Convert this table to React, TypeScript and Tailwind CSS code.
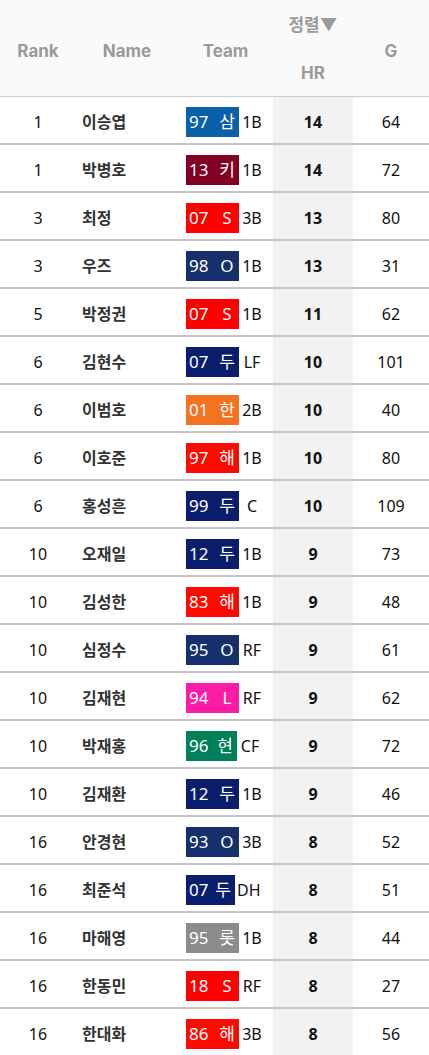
import React from "react";

type Row = {
  rank: number;
  name: string;
  no: string;
  team: string;
  color: string;
  bw: string;
  pos: string;
  hr: number;
  g: number;
};

const rows: Row[] = [
  { rank: 1, name: "이승엽", no: "97", team: "삼", color: "bg-[#0a61a9]", bw: "w-[53px]", pos: "1B", hr: 14, g: 64 },
  { rank: 1, name: "박병호", no: "13", team: "키", color: "bg-[#820024]", bw: "w-[53px]", pos: "1B", hr: 14, g: 72 },
  { rank: 3, name: "최정", no: "07", team: "S", color: "bg-[#ff0000]", bw: "w-[53px]", pos: "3B", hr: 13, g: 80 },
  { rank: 3, name: "우즈", no: "98", team: "O", color: "bg-[#17306c]", bw: "w-[53px]", pos: "1B", hr: 13, g: 31 },
  { rank: 5, name: "박정권", no: "07", team: "S", color: "bg-[#ff0000]", bw: "w-[53px]", pos: "1B", hr: 11, g: 62 },
  { rank: 6, name: "김현수", no: "07", team: "두", color: "bg-[#0b1e6e]", bw: "w-[53px]", pos: "LF", hr: 10, g: 101 },
  { rank: 6, name: "이범호", no: "01", team: "한", color: "bg-[#f37321]", bw: "w-[53px]", pos: "2B", hr: 10, g: 40 },
  { rank: 6, name: "이호준", no: "97", team: "해", color: "bg-[#ff0a00]", bw: "w-[53px]", pos: "1B", hr: 10, g: 80 },
  { rank: 6, name: "홍성흔", no: "99", team: "두", color: "bg-[#0b1e6e]", bw: "w-[53px]", pos: "C", hr: 10, g: 109 },
  { rank: 10, name: "오재일", no: "12", team: "두", color: "bg-[#0b1e6e]", bw: "w-[53px]", pos: "1B", hr: 9, g: 73 },
  { rank: 10, name: "김성한", no: "83", team: "해", color: "bg-[#ff0a00]", bw: "w-[53px]", pos: "1B", hr: 9, g: 48 },
  { rank: 10, name: "심정수", no: "95", team: "O", color: "bg-[#17306c]", bw: "w-[53px]", pos: "RF", hr: 9, g: 61 },
  { rank: 10, name: "김재현", no: "94", team: "L", color: "bg-[#fc1ca6]", bw: "w-[53px]", pos: "RF", hr: 9, g: 62 },
  { rank: 10, name: "박재홍", no: "96", team: "현", color: "bg-[#00805a]", bw: "w-[51px]", pos: "CF", hr: 9, g: 72 },
  { rank: 10, name: "김재환", no: "12", team: "두", color: "bg-[#0b1e6e]", bw: "w-[53px]", pos: "1B", hr: 9, g: 46 },
  { rank: 16, name: "안경현", no: "93", team: "O", color: "bg-[#17306c]", bw: "w-[53px]", pos: "3B", hr: 8, g: 52 },
  { rank: 16, name: "최준석", no: "07", team: "두", color: "bg-[#0b1e6e]", bw: "w-[49px]", pos: "DH", hr: 8, g: 51 },
  { rank: 16, name: "마해영", no: "95", team: "롯", color: "bg-[#8c8c8c]", bw: "w-[53px]", pos: "1B", hr: 8, g: 44 },
  { rank: 16, name: "한동민", no: "18", team: "S", color: "bg-[#ff0000]", bw: "w-[53px]", pos: "RF", hr: 8, g: 27 },
  { rank: 16, name: "한대화", no: "86", team: "해", color: "bg-[#ff0a00]", bw: "w-[53px]", pos: "3B", hr: 8, g: 56 },
];

const App = () => {
  return (
    <div className="w-[429px] bg-white font-['Noto_Sans','Noto_Sans_CJK_KR',sans-serif] text-[16px]">
      <div className="flex h-[97px] border-b border-[#cccccc] bg-[#fafafa] font-['Inter','Noto_Sans_CJK_KR',sans-serif] text-[17px] font-bold text-[#9a9a9a]">
        <div className="flex w-[76px] items-center justify-center pt-[7px]">Rank</div>
        <div className="flex w-[102px] items-center justify-center pt-[7px]">Name</div>
        <div className="flex w-[95px] items-center justify-center pt-[7px]">Team</div>
        <div className="flex w-[80px] flex-col items-center justify-center gap-[26px] pt-[2px]">
          <span className="leading-[22px]">정렬▼</span>
          <span className="leading-[22px]">HR</span>
        </div>
        <div className="flex w-[76px] items-center justify-center pt-[7px]">G</div>
      </div>
      {rows.map((r, i) => (
        <div key={i} className="flex h-[48px] border-b-2 border-[#c6c6c6] text-[#111]">
          <div className="flex w-[76px] items-center justify-center pt-[4px]">{r.rank}</div>
          <div className="flex w-[102px] items-center pl-[6px] pt-[4px] font-bold text-[#333]">{r.name}</div>
          <div className="flex w-[95px] items-center pl-[8px] pt-[3px]">
            <span className={`flex h-[30px] ${r.bw} ${r.color} items-center justify-between px-[3px] pt-[1px] text-[17px] text-white`}>
              <span>{r.no}</span>
              <span className="w-[18px] text-center">{r.team}</span>
            </span>
            <span className="ml-[2px] w-[22px] pt-[1px] text-center">{r.pos}</span>
          </div>
          <div className="flex w-[80px] items-center justify-center bg-[#f2f2f2] pt-[4px] font-bold">{r.hr}</div>
          <div className="flex w-[76px] items-center justify-center pt-[4px]">{r.g}</div>
        </div>
      ))}
    </div>
  );
};

export default App;
